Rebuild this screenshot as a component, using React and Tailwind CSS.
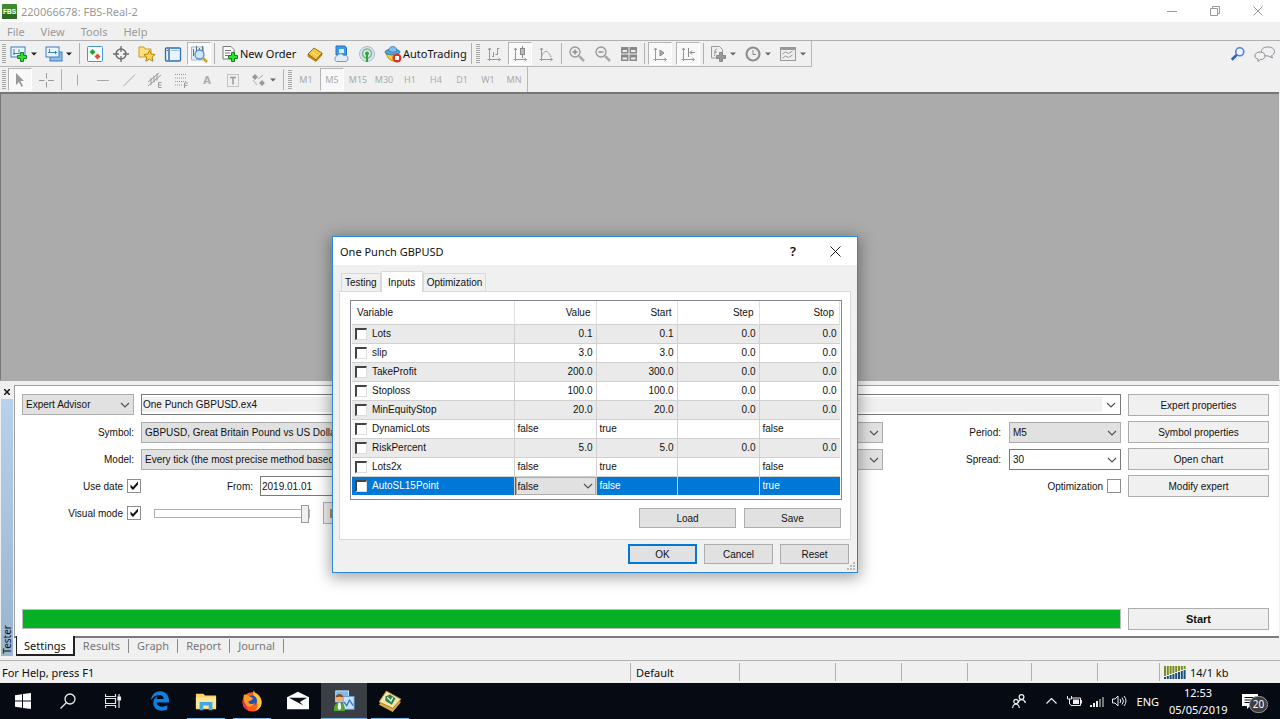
import React, { useState } from 'react'
import { FaEdgeLegacy } from 'react-icons/fa'

const inputs = [
  { name: 'Lots', cells: ['0.1', '0.1', '0.0', '0.0'] },
  { name: 'slip', cells: ['3.0', '3.0', '0.0', '0.0'] },
  { name: 'TakeProfit', cells: ['200.0', '300.0', '0.0', '0.0'] },
  { name: 'Stoploss', cells: ['100.0', '100.0', '0.0', '0.0'] },
  { name: 'MinEquityStop', cells: ['20.0', '20.0', '0.0', '0.0'] },
  { name: 'DynamicLots', bool: true, cells: ['false', 'true', '', 'false'] },
  { name: 'RiskPercent', cells: ['5.0', '5.0', '0.0', '0.0'] },
  { name: 'Lots2x', bool: true, cells: ['false', 'true', '', 'false'] },
  { name: 'AutoSL15Point', bool: true, selected: true, cells: ['false', 'false', '', 'true'] },
]

const Icon = ({ children, size = 18 }) => (
  <svg width={size} height={size} viewBox="0 0 18 18" fill="none" className="shrink-0" aria-hidden="true">
    {children}
  </svg>
)

const Chevron = ({ className = '' }) => (
  <svg width="10" height="6" viewBox="0 0 10 6" fill="none" stroke="#555" strokeWidth="1.2" className={className} aria-hidden="true">
    <path d="M1 1l4 4 4-4" />
  </svg>
)

const Caret = ({ color = '#222' }) => (
  <svg width="6" height="4" viewBox="0 0 6 4" className="shrink-0" aria-hidden="true">
    <path d="M0 0.5h6L3 3.5z" fill={color} />
  </svg>
)

const Plus = ({ fill = '#2fe02f', stroke = '#0b8a12' }) => (
  <path d="M10.5 7.5h3v3h3v3h-3v3h-3v-3h-3v-3h3z" fill={fill} stroke={stroke} />
)

const Axes = () => <path d="M4.5 3v13M2.500 14.5h13M3 5l1.500-2L6 5M13.500 13l2 1.500-2 1.500" stroke="#999" />

/* toolbar drawings */
const NewChart = () => (
  <Icon>
    <rect x="1" y="2" width="14" height="10" fill="#eaf4fd" stroke="#3b7fc0" />
    <path d="M4 4v6M3 8.5h9M9 4.5v3" stroke="#3b7fc0" />
    <Plus />
  </Icon>
)
const Profiles = () => (
  <Icon>
    <rect x="5" y="7" width="12" height="9" fill="#8fbdec" stroke="#3b7fc0" />
    <rect x="1" y="2" width="13" height="10" fill="#eaf4fd" stroke="#3b7fc0" />
    <path d="M3 7.5h9M4.5 4v3M10.5 6v3" stroke="#3b7fc0" />
  </Icon>
)
const MarketWatch = () => (
  <Icon>
    <rect x="1.5" y="1.5" width="15" height="15" rx="1" fill="#f5fafe" stroke="#4a93cf" />
    <path d="M6.5 4l3 3-3 3-3-3z" fill="#22a822" />
    <path d="M11.5 8.5l3 3-3 3-3-3z" fill="#e8502a" />
  </Icon>
)
const DataWindow = () => (
  <Icon>
    <circle cx="9" cy="9" r="5" stroke="#6c6c6c" strokeWidth="1.5" />
    <path d="M9 1v6M9 11v6M1 9h6M11 9h6" stroke="#6c6c6c" strokeWidth="1.3" />
  </Icon>
)
const Navigator = () => (
  <Icon>
    <path d="M1 2h5l1 2h6v8H1z" fill="#fbe27c" stroke="#c79a23" />
    <path d="M11.500 5.500l1.600 3.600 4 .4-3 2.700.9 4-3.500-2.100-3.600 2.100.9-4-3-2.700 4-.4z" fill="#ffd84a" stroke="#b07d16" />
  </Icon>
)
const Terminal = () => (
  <Icon>
    <rect x="1.5" y="3" width="15" height="13" rx="1" fill="#e9f3fd" stroke="#2f6fb5" strokeWidth="1.3" />
    <path d="M5 4v11" stroke="#2f6fb5" strokeWidth="1.5" />
    <path d="M7 5.5h8" stroke="#9cc4ea" />
    <path d="M2.500 5.5h1.500" stroke="#c33" />
  </Icon>
)
const Tester = () => (
  <Icon>
    <path d="M1.500 2h12v13h-12z" fill="#e4edf5" stroke="#a8b8c8" />
    <path d="M3.500 4v7M6.500 1v5M9.500 3v3M12.500 1v5" stroke="#5f7386" />
    <circle cx="9.500" cy="9.500" r="4.500" fill="#cfe5fa" stroke="#4f8ecb" strokeWidth="1.3" />
    <path d="M13 13l4 4" stroke="#d2a22c" strokeWidth="2.5" />
  </Icon>
)
const NewOrderIcon = () => (
  <Icon>
    <path d="M2 1.5h8l3 3V14H2z" fill="#fff" stroke="#777" />
    <path d="M4 5.5h6M4 8h5M4 10.5h3" stroke="#777" />
    <Plus />
  </Icon>
)
const Book = () => (
  <Icon>
    <path d="M2 9l6-6 8 5-6 7z" fill="#f5c83f" stroke="#a86f13" />
    <path d="M2 9v2.500l8 5 6-6.500V8l-6 7z" fill="#c98a1d" stroke="#8f5d0e" strokeWidth=".6" />
    <path d="M6.5 7.5l5 3.300" stroke="#fff0b0" />
  </Icon>
)
const Cloud = () => (
  <Icon>
    <path d="M4 1h9l1.500 2v7H4z" fill="#3b9bea" stroke="#2372b8" />
    <path d="M7 4h5v4H7z" fill="#d4ecff" />
    <path d="M4.500 16.500a3 3 0 01.3-5.500 4 4 0 017-.4 3 3 0 012.200 5.900z" fill="#e3ebf4" stroke="#7f97b3" />
  </Icon>
)
const Signal = () => (
  <Icon>
    <circle cx="9" cy="9" r="7.5" fill="#dbe6ee" stroke="#a5bccb" />
    <circle cx="9" cy="8.5" r="4.500" stroke="#77b58b" strokeWidth="1.5" />
    <circle cx="9" cy="8.5" r="2" fill="#2fa33c" />
    <path d="M9 9v8" stroke="#2fa33c" strokeWidth="2" />
  </Icon>
)
const AutoIcon = () => (
  <Icon>
    <path d="M2 8c2 6 4 8 9 8l3-8z" fill="#f4c93c" stroke="#b8892a" />
    <ellipse cx="8.5" cy="7" rx="7.5" ry="2.800" fill="#58a6de" stroke="#2f77b0" />
    <path d="M4.500 6C4.500 0 13 0 13 6c-2 1.500-6 1.500-8.500 0z" fill="#7cc0ee" stroke="#2f77b0" strokeWidth=".8" />
    <circle cx="13" cy="13" r="4.500" fill="#e03423" />
    <rect x="11" y="11" width="4" height="4" fill="#fff" />
  </Icon>
)
const BarIcon = () => (
  <Icon>
    <Axes />
    <path d="M8.5 7v5M12.5 3v7M8.500 11.5h-1.500M12.5 3.500h2M12.5 9.500h-2" stroke="#999" />
  </Icon>
)
const CandleIcon = () => (
  <Icon>
    <Axes />
    <path d="M11.5 1v12" stroke="#888" />
    <rect x="9.500" y="3.500" width="4" height="6" fill="#bbb" stroke="#888" />
  </Icon>
)
const LineIcon = () => (
  <Icon>
    <Axes />
    <path d="M4.500 12c2-7 6-8 9.500 0" stroke="#999" />
  </Icon>
)
const Zoom = ({ plus }) => (
  <Icon>
    <circle cx="7" cy="7" r="5" fill="#eee" stroke="#999" strokeWidth="1.3" />
    <path d={plus ? 'M4.500 7h5M7 4.500v5' : 'M4.500 7h5'} stroke="#888" strokeWidth="1.3" />
    <path d="M11 11l5 5" stroke="#aaa" strokeWidth="2.5" />
  </Icon>
)
const Tile = () => (
  <Icon>
    {[[1, 2], [9.5, 2], [1, 9.5], [9.5, 9.5]].map(([x, y]) => (
      <g key={`${x}-${y}`}>
        <rect x={x} y={y} width="7.5" height="6.5" fill="#888" />
        <rect x={x + 1.5} y={y + 3} width="4.5" height="2" fill="#eee" />
      </g>
    ))}
  </Icon>
)
const AutoScroll = () => (
  <Icon>
    <Axes />
    <path d="M9 5v6l4-3z" fill="#aaa" stroke="#888" />
  </Icon>
)
const Shift = () => (
  <Icon>
    <Axes />
    <path d="M9.5 3v9M16 7.5h-5M13 5.500l-2 2 2 2" stroke="#888" />
  </Icon>
)
const Indicators = () => (
  <Icon>
    <path d="M2.500 1.500h8l3 3V13h-11z" fill="#eee" stroke="#999" />
    <path d="M8 4c-3 0-1.500 3-2.500 7M5 7h3" stroke="#999" />
    <Plus fill="#999" stroke="#888" />
  </Icon>
)
const Clock = () => (
  <Icon>
    <circle cx="9" cy="9" r="6.500" fill="#eee" stroke="#8f8f8f" strokeWidth="2.200" />
    <path d="M9 5v4.500h3" stroke="#888" />
  </Icon>
)
const Template = () => (
  <Icon>
    <rect x="1.5" y="2.500" width="15" height="13" fill="#eee" stroke="#999" />
    <path d="M2 4h14" stroke="#999" strokeWidth="2" />
    <path d="M3.500 9l3-2 3 1.500 4-2.500M3.500 13l3-2 3 1.500 4-2.500" stroke="#999" />
  </Icon>
)

const lineTools = [
  { label: 'Vertical line', d: 'M9.5 3.5v11' },
  { label: 'Horizontal line', d: 'M3 9.5h12' },
  { label: 'Trendline', d: 'M3.5 15L15 3.5' },
]

const Grip = () => (
  <div className="mr-px ml-0.5 flex w-[4px] flex-col gap-px" aria-hidden="true">
    {Array.from({ length: 10 }, (_, i) => <div key={i} className="h-px bg-[#a8a8a8]" />)}
  </div>
)
const Sep = () => <div className="mx-0.5 h-[21px] w-px shrink-0 bg-[#b0b0b0]" />

const Tool = ({ label, pressed, children }) => (
  <button
    aria-label={label}
    className={`mx-px flex h-[23px] w-[24px] shrink-0 items-center justify-center ${pressed ? 'border border-[#b4b4b4] border-r-white border-b-white bg-[#f8f8f8]' : ''}`}
  >
    {children}
  </button>
)
const Split = ({ label, muted, children }) => (
  <button aria-label={label} className="flex h-[23px] w-[35px] shrink-0 items-center gap-[3px] pl-[3px]">
    {children}
    <Caret color={muted ? '#666' : '#222'} />
  </button>
)

const Check = ({ id, defaultChecked }) => (
  <span className="relative flex h-[14px] w-[14px] shrink-0">
    <input id={id} type="checkbox" defaultChecked={defaultChecked} className="peer h-[14px] w-[14px] appearance-none border border-[#8e8e8e] bg-white" />
    <svg viewBox="0 0 14 14" className="pointer-events-none absolute inset-0 hidden peer-checked:block" aria-hidden="true">
      <path d="M3.5 5.500v3l2.500 2.500 5-5.500v-3L6 8z" fill="#111" />
    </svg>
  </span>
)

const Select = ({ label, id, value, className = '', tone = 'bg-[#e1e1e1]', edge = 'border-[#adadad]' }) => (
  <span className={`relative flex ${className}`}>
    <select id={id} aria-label={label} defaultValue={value} className={`h-[21px] w-full appearance-none border pr-5 pl-[3px] ${tone} ${edge}`}>
      <option>{value}</option>
    </select>
    <Chevron className="pointer-events-none absolute top-[8px] right-[4px]" />
  </span>
)

const PanelButton = ({ children, bold }) => (
  <button className={`h-[22px] w-[141px] shrink-0 border border-[#adadad] bg-[#f0f0f0] ${bold ? 'text-[11px] font-bold' : ''}`}>
    {children}
  </button>
)

const TitleBar = () => (
  <header className="flex h-[22px] items-center bg-white pl-[2px] text-[#999]">
    <svg width="15" height="15" viewBox="0 0 15 15" aria-hidden="true">
      <rect width="15" height="15" rx="1" fill="#3d8b2c" />
      <rect y="10" width="15" height="5" fill="#2c6b20" />
      <text x="7.5" y="9.5" textAnchor="middle" fontSize="6.5" fontWeight="bold" fill="#fff" fontFamily="Liberation Sans, sans-serif">FBS</text>
    </svg>
    <h1 className="ml-1 flex-1">220066678: FBS-Real-2</h1>
    <div className="flex pr-px">
      <button aria-label="Minimize" className="flex h-5 w-[43px] items-center justify-center">
        <svg width="10" height="10" stroke="#999"><path d="M0 5.5h10" /></svg>
      </button>
      <button aria-label="Restore" className="flex h-5 w-[43px] items-center justify-center">
        <svg width="10" height="10" stroke="#999" fill="none"><path d="M.5 2.5h7v7h-7zM2.5 2.5v-2h7v7h-2" /></svg>
      </button>
      <button aria-label="Close" className="flex h-5 w-[43px] items-center justify-center">
        <svg width="10" height="10" stroke="#999"><path d="M.5.5l9 9M9.5.5l-9 9" /></svg>
      </button>
    </div>
  </header>
)

const Toolbars = () => (
  <div className="bg-[#f0f0f0]">
    <div className="flex h-[27px] items-center border-t border-[#b0b0b0]">
      <div className="flex h-full items-center border-r border-b border-[#b8b8b8]">
        <Grip />
        <Split label="New chart"><NewChart /></Split>
        <Split label="Profiles"><Profiles /></Split>
        <Sep />
        <Tool label="Market Watch"><MarketWatch /></Tool>
        <Tool label="Data Window"><DataWindow /></Tool>
        <Tool label="Navigator"><Navigator /></Tool>
        <Tool label="Terminal"><Terminal /></Tool>
        <Tool label="Strategy Tester" pressed><Tester /></Tool>
        <Sep />
        <button className="ml-1 flex h-[23px] w-[81px] items-center gap-px whitespace-nowrap">
          <NewOrderIcon />
          New Order
        </button>
        <Tool label="MetaEditor"><Book /></Tool>
        <Tool label="Virtual hosting"><Cloud /></Tool>
        <Tool label="Signals"><Signal /></Tool>
        <button className="ml-1 flex h-[23px] w-[85px] items-center gap-px whitespace-nowrap">
          <AutoIcon />
          AutoTrading
        </button>
        <Sep />
        <Grip />
        <Tool label="Bar chart"><BarIcon /></Tool>
        <Tool label="Candlesticks" pressed><CandleIcon /></Tool>
        <Tool label="Line chart"><LineIcon /></Tool>
        <Sep />
        <Tool label="Zoom in"><Zoom plus /></Tool>
        <Tool label="Zoom out"><Zoom /></Tool>
        <Tool label="Tile windows"><Tile /></Tool>
        <Sep />
        <div className="flex gap-0.5">
          <Tool label="Auto scroll" pressed><AutoScroll /></Tool>
          <Tool label="Chart shift" pressed><Shift /></Tool>
        </div>
        <Sep />
        <Split label="Indicators" muted><Indicators /></Split>
        <Split label="Periods" muted><Clock /></Split>
        <Split label="Templates" muted><Template /></Split>
      </div>
      <div className="ml-auto flex items-center gap-2 pr-1">
        <button aria-label="Search">
          <Icon size={16}>
            <circle cx="11" cy="6.5" r="4.500" fill="#eef4ff" stroke="#4f81dc" strokeWidth="1.800" />
            <path d="M7.500 10L2 15.500" stroke="#2e5fc4" strokeWidth="3" />
          </Icon>
        </button>
        <button aria-label="Community">
          <svg width="22" height="16" viewBox="0 0 22 16" fill="#f0f0f4" stroke="#8d8d8d" aria-hidden="true">
            <path d="M14 1c4 0 6.500 1.800 6.500 4.500 0 2-1.500 3.500-3 4l1 2.500-4-2C9.500 10 7.500 8 7.500 5.500 7.500 2.500 10 1 14 1z" />
            <path d="M6 6c3 0 5 1.500 5 4s-2 3.500-4.500 3.500L4 15.500V13C2 12.500 1 11.500 1 10c0-2.500 2-4 5-4z" />
          </svg>
        </button>
      </div>
    </div>
    <div className="flex h-[25px] items-center text-[#aaa]">
      <div className="flex h-full items-center border-r border-[#b8b8b8]">
        <Grip />
        <Tool label="Cursor" pressed>
          <Icon><path d="M5 2v12l3-3 2.500 5 1.500-1-2.500-5H13z" fill="#999" /></Icon>
        </Tool>
        <Tool label="Crosshair">
          <Icon><path d="M9.5 2v5.500M9.5 11v5.500M2 9.5h5.500M11 9.5h6" stroke="#999" /></Icon>
        </Tool>
        <Sep />
        {lineTools.map((t) => (
          <Tool key={t.label} label={t.label}>
            <Icon><path d={t.d} stroke="#a8a8a8" /></Icon>
          </Tool>
        ))}
        <Tool label="Equidistant channel">
          <Icon>
            <path d="M2 11L13 2M2 15L15 4M5 7v7M8 4.500v7M11 2.500v7" stroke="#999" />
            <path d="M15.5 11.500h-3v5h3M12.500 14h3" stroke="#999" />
          </Icon>
        </Tool>
        <Tool label="Fibonacci">
          <Icon>
            <path d="M3 3.500h12M3 7h12M3 10.500h12M3 14h8" stroke="#999" strokeDasharray="1 1" />
            <path d="M16 12h-3.500v5M12.500 14.500h3" stroke="#999" />
          </Icon>
        </Tool>
        <Tool label="Text"><span className="font-bold">A</span></Tool>
        <Tool label="Text label">
          <Icon>
            <rect x="3.5" y="3.5" width="11" height="12" stroke="#999" strokeDasharray="1 1" />
            <path d="M6 6.500h6M9 6.500v7" stroke="#999" strokeWidth="1.5" />
          </Icon>
        </Tool>
        <Split label="Arrows" muted>
          <Icon>
            <path d="M6 3l3 3-3 3-3-3zM13 9l3 3-3 3-3-3z" fill="#999" />
            <path d="M4 9l4 5M9 8l5-4" stroke="#aaa" />
          </Icon>
        </Split>
        <Sep />
        <Grip />
        {['M1', 'M5', 'M15', 'M30', 'H1', 'H4', 'D1', 'W1', 'MN'].map((tf) => (
          <Tool key={tf} label={tf} pressed={tf === 'M5'}>
            <span className="text-[9px]">{tf}</span>
          </Tool>
        ))}
      </div>
    </div>
  </div>
)

const TesterPanel = () => (
  <section className="flex border-t border-[#a8a8a8] pt-1">
    <div className="flex w-[14px] flex-col items-center">
      <button aria-label="Close panel" className="flex h-[14px] items-center">
        <svg width="6" height="6" stroke="#111" strokeWidth="1.5"><path d="M0 0l6 6M6 0L0 6" /></svg>
      </button>
      <div className="flex w-[12px] flex-1 items-end justify-center bg-gradient-to-b from-[#b9d1ea] to-[#99b4d1]">
        <span className="rotate-180 pt-0.5 text-[10px] leading-[12px] [writing-mode:vertical-rl]">Tester</span>
      </div>
    </div>
    <div className="mr-px flex-1">
      <div className="border-t border-l border-[#a0a0a0] bg-white pt-2 pr-[10px] pl-[7px] font-['Liberation_Sans',sans-serif] text-[10px]">
        <div className="flex flex-col gap-[5px]">
          <div className="flex gap-[7px]">
            <Select label="Type" value="Expert Advisor" className="w-[112px]" />
            <span className="flex h-[21px] flex-1 items-center border border-[#7a7a7a] bg-white pr-1">
              <select aria-label="Expert" className="h-[15px] flex-1 appearance-none bg-[#f0f0f0] pl-px">
                <option>One Punch GBPUSD.ex4</option>
              </select>
              <Chevron className="ml-1" />
            </span>
            <PanelButton>Expert properties</PanelButton>
          </div>
          <div className="flex items-center gap-[7px]">
            <label htmlFor="symbol" className="w-[112px] text-right">Symbol:</label>
            <Select id="symbol" value="GBPUSD, Great Britain Pound vs US Dollar" className="flex-1" />
            <div className="flex w-[231px] items-center justify-end gap-2">
              <label htmlFor="period">Period:</label>
              <Select id="period" value="M5" className="w-[112px]" />
            </div>
            <PanelButton>Symbol properties</PanelButton>
          </div>
          <div className="flex items-center gap-[7px]">
            <label htmlFor="model" className="w-[112px] text-right">Model:</label>
            <Select id="model" value="Every tick (the most precise method based on all available least timeframes)" className="flex-1" />
            <div className="flex w-[231px] items-center justify-end gap-2">
              <label htmlFor="spread">Spread:</label>
              <Select id="spread" value="30" className="w-[112px]" tone="bg-white" edge="border-[#7a7a7a]" />
            </div>
            <PanelButton>Open chart</PanelButton>
          </div>
          <div className="flex items-center">
            <div className="flex w-[119px] items-center justify-end gap-1">
              <label htmlFor="usedate">Use date</label>
              <Check id="usedate" defaultChecked />
            </div>
            <label htmlFor="from" className="w-[112px] text-right">From:</label>
            <input id="from" defaultValue="2019.01.01" className="ml-[7px] h-[20px] w-[112px] border border-[#7a7a7a] bg-white pl-px" />
            <div className="ml-auto flex items-center gap-1 pr-[7px]">
              <label htmlFor="optimization">Optimization</label>
              <Check id="optimization" />
            </div>
            <PanelButton>Modify expert</PanelButton>
          </div>
          <div className="flex items-center">
            <div className="flex w-[119px] items-center justify-end gap-1">
              <label htmlFor="visual">Visual mode</label>
              <Check id="visual" defaultChecked />
            </div>
            <input
              type="range"
              aria-label="Visual speed"
              defaultValue="100"
              className="ml-[13px] h-[18px] w-[156px] appearance-none bg-transparent [&::-webkit-slider-runnable-track]:h-[9px] [&::-webkit-slider-runnable-track]:border [&::-webkit-slider-runnable-track]:border-[#b0b0b0] [&::-webkit-slider-thumb]:-mt-[5px] [&::-webkit-slider-thumb]:h-[18px] [&::-webkit-slider-thumb]:w-[8px] [&::-webkit-slider-thumb]:appearance-none [&::-webkit-slider-thumb]:border [&::-webkit-slider-thumb]:border-[#999] [&::-webkit-slider-thumb]:bg-[#f0f0f0]"
            />
            <button aria-label="Skip to" className="ml-[13px] flex h-[22px] w-[60px] items-center border border-[#adadad] bg-[#f0f0f0] pl-[6px]">
              <span className="h-[9px] w-[8px] bg-[#d08a3a]" />
            </button>
          </div>
        </div>
        <div className="mt-[84px] flex items-center gap-[7px] pb-[6px]">
          <div role="progressbar" aria-label="Test progress" aria-valuenow={100} className="h-[20px] flex-1 border border-[#bcbcbc] bg-[#06b025]" />
          <PanelButton bold>Start</PanelButton>
        </div>
      </div>
      <nav className="flex items-start border-t-2 border-[#7a7a7a] pl-[2px] text-[#777]">
        <button className="-mt-0.5 h-[20px] border-r-2 border-b-2 border-l border-[#222] bg-white px-[7px] text-[#111]">Settings</button>
        {['Results', 'Graph', 'Report', 'Journal'].map((tab) => (
          <button key={tab} className="mt-px h-[14px] border-r border-[#888] px-2 leading-[14px]">{tab}</button>
        ))}
      </nav>
    </div>
  </section>
)

const StatusBar = () => (
  <footer className="mt-1 flex h-[23px] items-center border-t border-[#b0b0b0]">
    <div className="flex-1 pl-0.5">For Help, press F1</div>
    <div className="flex h-[18px] w-[109px] items-center border-l border-[#b0b0b0] pl-[5px]">Default</div>
    <div className="h-[18px] w-[96px] border-l border-[#b0b0b0]" />
    <div className="h-[18px] w-[66px] border-l border-[#b0b0b0]" />
    <div className="h-[18px] w-[66px] border-l border-[#b0b0b0]" />
    <div className="h-[18px] w-[64px] border-l border-[#b0b0b0]" />
    <div className="h-[18px] w-[66px] border-l border-[#b0b0b0]" />
    <div className="h-[18px] w-[62px] border-l border-[#b0b0b0]" />
    <div className="flex h-[18px] w-[121px] items-center gap-1 border-l border-[#b0b0b0] pl-1">
      <svg width="22" height="13" aria-hidden="true">
        {Array.from({ length: 8 }, (_, i) => (
          <g key={i}>
            <rect x={i * 2.8} width="2" height={10 - i} fill="#7a8f1f" />
            <rect x={i * 2.8} y={11 - i} width="2" height={2 + i} fill="#1d4f7a" />
          </g>
        ))}
      </svg>
      14/1 kb
    </div>
  </footer>
)

const Dialog = () => {
  const [tab, setTab] = useState('Inputs')

  return (
    <div
      role="dialog"
      aria-label="One Punch GBPUSD"
      className="absolute top-[236px] left-[332px] w-[526px] border border-[#2b88d8] bg-[#f0f0f0] font-['Liberation_Sans',sans-serif] text-[10px] shadow-[0_3px_14px_2px_rgba(0,0,0,0.35)]"
    >
      <div className="flex h-[28px] items-center bg-white pr-px pl-[7px] font-['Noto_Sans',sans-serif] text-[11px]">
        <h2 className="flex-1">One Punch GBPUSD</h2>
        <button aria-label="Help" className="w-[42px] text-[13px] font-semibold">?</button>
        <button aria-label="Close" className="flex w-[42px] justify-center">
          <svg width="11" height="11" stroke="#222"><path d="M.5.5l10 10M10.5.5l-10 10" /></svg>
        </button>
      </div>
      <div className="px-[6px] pt-[6px] pb-2">
        <div role="tablist" className="flex items-end pl-0.5">
          {['Testing', 'Inputs', 'Optimization'].map((t) => (
            <button
              key={t}
              role="tab"
              aria-selected={t === tab}
              onClick={() => setTab(t)}
              className={`border border-b-0 border-[#d9d9d9] ${t === tab ? 'z-10 -mb-px h-[21px] w-[42px] bg-white' : 'h-[18px] px-[3px]'}`}
            >
              {t}
            </button>
          ))}
        </div>
        <div className="border border-[#d9d9d9] bg-white pt-[8px] pr-[8px] pb-[10px] pl-[10px]">
          <div className="border border-[#828790] px-px pb-1">
            <table className="w-full table-fixed border-collapse">
              <colgroup>
                <col className="w-[162px]" />
                <col className="w-[82px]" />
                <col className="w-[81px]" />
                <col className="w-[82px]" />
                <col />
              </colgroup>
              <thead>
                <tr className="h-[23px]">
                  <th className="border-r border-[#e0e0e0] pl-[5px] text-left font-normal">Variable</th>
                  {['Value', 'Start', 'Step', 'Stop'].map((h) => (
                    <th key={h} className="border-r border-[#e0e0e0] pr-[5px] text-right font-normal">{h}</th>
                  ))}
                </tr>
              </thead>
              <tbody>
                {inputs.map((row, i) => (
                  <tr
                    key={row.name}
                    className={`h-[19px] border-t border-[#d0d0d0] ${row.selected ? 'bg-[#0078d7] text-white' : i % 2 ? 'bg-white' : 'bg-[#eaeaea]'}`}
                  >
                    <td className="border-r border-[#d0d0d0] p-0">
                      <label className="flex items-center gap-[5px] pl-[3px]">
                        <input type="checkbox" className="h-[12px] w-[12px] appearance-none border-t-2 border-r border-b border-l-2 border-t-[#444] border-r-[#ddd] border-b-[#ddd] border-l-[#444] bg-white" />
                        {row.name}
                      </label>
                    </td>
                    {row.cells.map((cell, c) => (
                      <td
                        key={c}
                        className={`border-r border-[#d0d0d0] p-0 leading-[18px] last:border-r-0 ${row.bool ? 'pl-[3px] text-left' : 'pr-[3px] text-right'}`}
                      >
                        {row.selected && c === 0 ? (
                          <span className="relative -ml-0.5 flex">
                            <select aria-label="AutoSL15Point value" defaultValue={cell} className="h-[18px] w-full appearance-none border border-[#adadad] bg-[#e1e1e1] pl-px text-[#111]">
                              <option>false</option>
                              <option>true</option>
                            </select>
                            <Chevron className="pointer-events-none absolute top-[6px] right-[3px]" />
                          </span>
                        ) : cell}
                      </td>
                    ))}
                  </tr>
                ))}
              </tbody>
            </table>
          </div>
          <div className="mt-[8px] flex justify-end gap-2 pr-px pb-px">
            {['Load', 'Save'].map((b) => (
              <button key={b} className="h-[20px] w-[97px] border border-[#adadad] bg-[#e1e1e1]">{b}</button>
            ))}
          </div>
        </div>
        <div className="mt-1 flex justify-end gap-[7px] pr-[2px]">
          <button className="h-[20px] w-[69px] border-2 border-[#0078d7] bg-[#e1e1e1]">OK</button>
          <button className="h-[20px] w-[69px] border border-[#adadad] bg-[#e1e1e1]">Cancel</button>
          <button className="h-[20px] w-[69px] border border-[#adadad] bg-[#e1e1e1]">Reset</button>
        </div>
      </div>
      <svg width="8" height="8" fill="#b8b8b8" className="absolute right-0.5 bottom-0.5" aria-hidden="true">
        <path d="M6 0h2v2H6zM3 3h2v2H3zM6 3h2v2H6zM0 6h2v2H0zM3 6h2v2H3zM6 6h2v2H6z" />
      </svg>
    </div>
  )
}

/* taskbar drawings */
const apps = [
  {
    label: 'File Explorer',
    running: true,
    icon: (
      <>
        <path d="M1 4h8l2 2h12v15H1z" fill="#f8d36b" />
        <path d="M1 8h22v12H1z" fill="#fde596" />
        <path d="M5 13h14v9h-4v-5H9v5H5z" fill="#3fa9e8" />
      </>
    ),
  },
  {
    label: 'Firefox',
    running: true,
    icon: (
      <>
        <circle cx="12" cy="13" r="10.500" fill="#ff5a1f" />
        <path d="M14 0c0 3 4 4 6 7 5 6 2 14-5 16 4-4 4-10 0-14-2-2-2-6-1-9z" fill="#ffc72f" />
        <path d="M3 7c-3 6 0 14 7 16-4-3-5-6-4-10z" fill="#e5245e" />
        <circle cx="12" cy="11.500" r="5.500" fill="#2450b8" />
        <path d="M3 5c4 0 6 2 10 4-1 3-4 2-5 4 1 3 5 3 7 1-1 5-9 6-11 0-1-3-1-6-1-9z" fill="#ff9b26" />
      </>
    ),
  },
  {
    label: 'Mail',
    icon: (
      <>
        <path d="M0 8l12-6 12 6v13H0z" fill="#fff" />
        <path d="M2 8.500h20l-8 4.500 4 4z" fill="#0a0e16" />
      </>
    ),
  },
  {
    label: 'MetaTrader 4',
    running: true,
    active: true,
    icon: (
      <>
        <rect x="3" y="1" width="14" height="12" fill="#7db9ec" stroke="#d4e9fb" />
        <rect x="11" y="7" width="12" height="14" fill="#c9e2fa" stroke="#5c9bd6" />
        <path d="M12 13l3 4 3-6 4 6" stroke="#3579c2" fill="none" strokeWidth="1.5" />
        <circle cx="7" cy="9" r="4" fill="#f0b27c" />
        <path d="M3 8c0-5 8-5 8 0-3-1-5-1-8 0z" fill="#8a4b1d" />
        <path d="M1 23c0-7 2-9 6-9s6 2 6 9z" fill="#55a630" />
        <path d="M6 14h2l1 6-2 2-2-2z" fill="#fff" />
      </>
    ),
  },
  {
    label: 'MetaEditor',
    running: true,
    icon: (
      <>
        <path d="M0 16L8 4l16 9-9 11z" fill="#d8a93c" />
        <path d="M0 13L8 1l16 9-9 10z" fill="#f3e4a8" stroke="#a97f22" />
        <path d="M7 7l5-2 6 4-4 7-7-4z" fill="#2f7d54" />
        <path d="M9 8l4 4 2-4" stroke="#dff2c0" strokeWidth="1.5" fill="none" />
      </>
    ),
  },
]

const Taskbar = () => (
  <div className="flex h-[36px] items-stretch bg-[#060a12] text-white">
    <button aria-label="Start menu" className="flex w-[45px] items-center justify-center">
      <svg width="16" height="16" fill="#fff"><path d="M0 2.200l7-1v6.300H0zM8 1.100L16 0v7.500H8zM0 8.500h7v6.300l-7-1zM8 8.500h8V16l-8-1.100z" /></svg>
    </button>
    <button aria-label="Search Windows" className="flex w-[46px] items-center justify-center">
      <svg width="16" height="16" fill="none" stroke="#eee" strokeWidth="1.3"><circle cx="10" cy="6" r="5" /><path d="M6.500 9.500L.5 15.500" /></svg>
    </button>
    <button aria-label="Task view" className="flex w-[46px] items-center justify-center">
      <svg width="18" height="16" fill="none" stroke="#e6e6e6" strokeWidth="1.2"><path d="M.5 1v2.500h10V1M.5 15v-2.500h10V15M.5 5.500h10v5H.5zM14 1v14" /><path d="M13 4h2.500v3H13z" fill="#fff" /></svg>
    </button>
    <button aria-label="Edge" className="flex w-[46px] items-center justify-center text-[20px] text-[#0f7fe0]">
      <FaEdgeLegacy />
    </button>
    {apps.map((app) => (
      <button key={app.label} aria-label={app.label} className={`relative flex w-[46px] items-center justify-center ${app.active ? 'bg-[#3a3e45]' : ''}`}>
        <svg width="22" height="22" viewBox="0 0 24 24" aria-hidden="true">{app.icon}</svg>
        {app.running && <span className={`absolute bottom-0 h-px bg-[#76b9ed] ${app.active ? 'w-full' : 'w-[38px]'}`} />}
      </button>
    ))}
    <div className="ml-auto flex items-center">
      <button aria-label="People" className="mr-5">
        <svg width="14" height="14" fill="none" stroke="#eee" strokeWidth="1.2"><circle cx="9.5" cy="3" r="2.4" /><path d="M6 9c1-4 6-5 7.500 0" /><circle cx="4" cy="7.5" r="2.2" /><path d="M.6 14c.5-5 6-5 6.800 0" /></svg>
      </button>
      <button aria-label="Hidden icons" className="mr-[10px]">
        <svg width="11" height="6" fill="none" stroke="#eee" strokeWidth="1.2"><path d="M.5 5.500l5-5 5 5" /></svg>
      </button>
      <svg width="15" height="12" className="mr-2" aria-label="Battery">
        <path d="M5 3h8.500v7.500H4" fill="none" stroke="#eee" />
        <path d="M6 4.500h6v4.500H6zM14 5h1v3.500h-1z" fill="#eee" />
        <path d="M.5 1v3h4V1M2.500 4v5l2 1.500" fill="none" stroke="#eee" />
      </svg>
      <svg width="14" height="12" className="mr-2" aria-label="Network">
        <path d="M0 10h2v2H0zM3 8h2v4H3zM6 6h2v6H6z" fill="#eee" />
        <path d="M9 4h2v8H9zM12 2h2v10h-2z" fill="#777" />
      </svg>
      <svg width="15" height="12" className="mr-[10px]" fill="none" stroke="#eee" aria-label="Volume">
        <path d="M.5 4v4h2.500l3 3V1L3 4zM8 4q1.500 2 0 4M10 2.500q3 3.500 0 7M12 1q4 5 0 10" />
      </svg>
      <span className="mr-[10px]">ENG</span>
      <div className="mr-[15px] w-[58px] text-center leading-[17px] whitespace-nowrap">
        <div>12:53</div>
        <div>05/05/2019</div>
      </div>
      <button aria-label="Notifications" className="relative mr-[12px] h-[24px] w-[26px]">
        <svg width="16" height="15" viewBox="0 0 16 15" aria-hidden="true">
          <path d="M0 0h16v12H8l-3 3v-3H0z" fill="#fff" />
          <path d="M2.500 3.500h11M2.500 6h11M2.500 8.500h7" stroke="#060a12" />
        </svg>
        <span className="absolute right-0 bottom-0 flex h-[17px] w-[19px] items-center justify-center rounded-full border border-[#999] bg-[#3a3d42] text-[10px]">20</span>
      </button>
    </div>
  </div>
)

export default function App() {
  return (
    <div className="relative flex min-h-screen flex-col bg-[#f0f0f0] font-['Noto_Sans',sans-serif] text-[11px] leading-[15px] text-[#111]">
      <TitleBar />
      <nav className="flex h-[18px] items-center gap-4 pl-[7px] text-[#999]">
        {['File', 'View', 'Tools', 'Help'].map((m) => <button key={m}>{m}</button>)}
      </nav>
      <Toolbars />
      <main className="mr-px flex-1 border-t-2 border-l border-[#777] bg-[#ababab]" />
      <TesterPanel />
      <StatusBar />
      <Taskbar />
      <Dialog />
    </div>
  )
}
